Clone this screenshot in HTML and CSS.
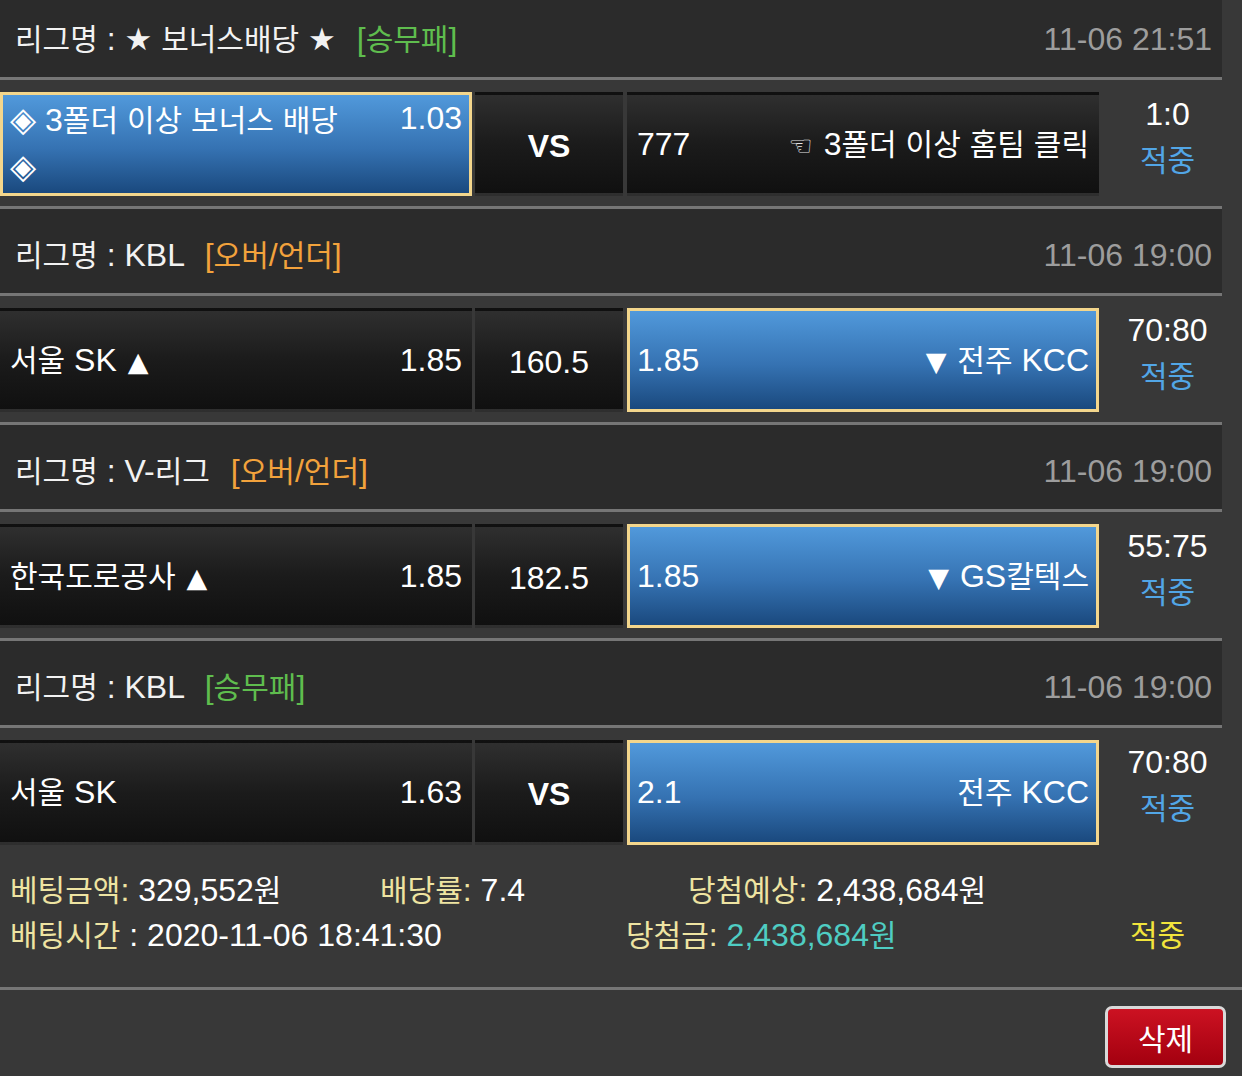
FILE: index.html
```html
<!DOCTYPE html>
<html lang="ko">
<head>
<meta charset="utf-8">
<title>베팅내역</title>
<link rel="stylesheet" href="styles.css">
</head>
<body>
<div class="page">
  <div class="board">
    <section class="group">
      <div class="league">
        <div class="lname"><span class="k">리그명</span> : <span class="star">★</span> <span class="k">보너스배당</span> <span class="star">★</span> <span class="tag green">[<span class="k">승무패</span>]</span></div>
        <div class="ldate">11-06 21:51</div>
      </div>
      <div class="bet">
        <div class="cell side sel">
          <div class="name two"><span class="dia">◈</span> 3<span class="k">폴더</span> <span class="k">이상</span> <span class="k">보너스</span> <span class="k">배당</span><br><span class="dia">◈</span></div>
          <div class="odd top">1.03</div>
        </div>
        <div class="cell mid"><b>VS</b></div>
        <div class="cell side">
          <div class="odd">777</div>
          <div class="name"><span class="hand">☜</span> 3<span class="k">폴더</span> <span class="k">이상</span> <span class="k">홈팀</span> <span class="k">클릭</span></div>
        </div>
        <div class="score"><div class="sline">1:0</div><div class="sline hit"><span class="k">적중</span></div></div>
      </div>
    </section>

    <section class="group">
      <div class="league">
        <div class="lname"><span class="k">리그명</span> : KBL <span class="tag orange">[<span class="k">오버</span>/<span class="k">언더</span>]</span></div>
        <div class="ldate">11-06 19:00</div>
      </div>
      <div class="bet">
        <div class="cell side">
          <div class="name"><span class="k">서울</span> SK <span class="tri">▲</span></div>
          <div class="odd">1.85</div>
        </div>
        <div class="cell mid">160.5</div>
        <div class="cell side sel">
          <div class="odd">1.85</div>
          <div class="name"><span class="tri">▼</span> <span class="k">전주</span> KCC</div>
        </div>
        <div class="score"><div class="sline">70:80</div><div class="sline hit"><span class="k">적중</span></div></div>
      </div>
    </section>

    <section class="group">
      <div class="league">
        <div class="lname"><span class="k">리그명</span> : V-<span class="k">리그</span> <span class="tag orange">[<span class="k">오버</span>/<span class="k">언더</span>]</span></div>
        <div class="ldate">11-06 19:00</div>
      </div>
      <div class="bet">
        <div class="cell side">
          <div class="name"><span class="k">한국도로공사</span> <span class="tri">▲</span></div>
          <div class="odd">1.85</div>
        </div>
        <div class="cell mid">182.5</div>
        <div class="cell side sel">
          <div class="odd">1.85</div>
          <div class="name"><span class="tri">▼</span> GS<span class="k">칼텍스</span></div>
        </div>
        <div class="score"><div class="sline">55:75</div><div class="sline hit"><span class="k">적중</span></div></div>
      </div>
    </section>

    <section class="group">
      <div class="league">
        <div class="lname"><span class="k">리그명</span> : KBL <span class="tag green">[<span class="k">승무패</span>]</span></div>
        <div class="ldate">11-06 19:00</div>
      </div>
      <div class="bet">
        <div class="cell side">
          <div class="name"><span class="k">서울</span> SK</div>
          <div class="odd">1.63</div>
        </div>
        <div class="cell mid"><b>VS</b></div>
        <div class="cell side sel">
          <div class="odd">2.1</div>
          <div class="name"><span class="k">전주</span> KCC</div>
        </div>
        <div class="score"><div class="sline">70:80</div><div class="sline hit"><span class="k">적중</span></div></div>
      </div>
    </section>
  </div>

  <div class="summary">
    <div class="srow">
      <div class="c1"><span class="lab"><span class="k">베팅금액</span>:</span> 329,552<span class="k">원</span></div>
      <div class="c2"><span class="lab"><span class="k">배당률</span>:</span> 7.4</div>
      <div><span class="lab"><span class="k">당첨예상</span>:</span> 2,438,684<span class="k">원</span></div>
    </div>
    <div class="srow">
      <div class="d1"><span class="lab"><span class="k">배팅시간</span></span> : 2020-11-06 18:41:30</div>
      <div class="d2"><span class="lab"><span class="k">당첨금</span>:</span> <span class="win">2,438,684<span class="k">원</span></span></div>
      <div class="result"><span class="k">적중</span></div>
    </div>
  </div>

  <div class="foot">
    <button class="del" type="button">삭제</button>
  </div>
</div>
</body>
</html>
```

FILE: styles.css
```css
html, body {
  margin: 0;
  padding: 0;
}

body {
  background: #383838;
  color: #ffffff;
  font-family: "Liberation Sans", "Noto Sans CJK KR", sans-serif;
  font-size: 32px;
  overflow: hidden;
}

.page {
  width: 1242px;
}

.k {
  font-family: "Noto Sans CJK KR", sans-serif;
  font-size: 30px;
  line-height: 1;
}

.board {
  width: 1222px;
  margin-top: -7px;
}

.league {
  box-sizing: border-box;
  height: 87px;
  background: #2b2b2b;
  border-bottom: 3px solid #767676;
  display: flex;
  align-items: center;
  justify-content: space-between;
  padding: 7px 10px 0 15px;
  line-height: 36px;
  color: #f2f2f2;
}

.star {
  font-family: "DejaVu Sans", sans-serif;
  font-size: 31px;
  line-height: 1;
}

.tag {
  margin-left: 12px;
}

.green {
  color: #5fbd4e;
}

.orange {
  color: #f2a23c;
}

.ldate {
  color: #9d9d9d;
}

.bet {
  display: flex;
  height: 129px;
  box-sizing: border-box;
  padding: 12px 0 10px;
  border-bottom: 3px solid #767676;
}

.group:last-child .bet {
  height: 117px;
  padding-bottom: 0;
  border-bottom: 0;
}

.group:last-child .cell {
  height: 105px;
}

.cell {
  box-sizing: border-box;
  height: 104px;
  border: 3px solid transparent;
  background: linear-gradient(#2f2f2f, #1b1b1b 50%, #101010);
  display: flex;
  align-items: center;
  justify-content: space-between;
  padding: 0 7px;
  line-height: 47px;
  color: #ffffff;
}

.side {
  width: 472px;
}

.mid {
  width: 148px;
  margin: 0 4px 0 3px;
  justify-content: center;
  padding-top: 4px;
}

.mid b {
  font-weight: bold;
}

.sel {
  border-color: #f3d68c;
  background: linear-gradient(#5199db, #3572b2 55%, #1a497e);
}

.odd.top {
  align-self: flex-start;
}

.dia {
  font-family: "DejaVu Sans", sans-serif;
  font-size: 34px;
  line-height: 1;
}

.hand {
  font-family: "DejaVu Sans", sans-serif;
  font-size: 27px;
  line-height: 1;
  color: #e6e6e6;
  margin-right: 2px;
}

.tri {
  font-family: "DejaVu Sans", sans-serif;
  font-size: 27px;
  line-height: 1;
  margin: 0 2px;
}

.score {
  box-sizing: border-box;
  width: 123px;
  height: 104px;
  display: flex;
  flex-direction: column;
  align-items: center;
  justify-content: center;
  padding: 0 0 14px 14px;
}

.sline {
  height: 46px;
  line-height: 46px;
}

.hit {
  color: #52a6e6;
}

.summary {
  box-sizing: border-box;
  height: 145px;
  border-bottom: 3px solid #767676;
  padding: 23px 0 0 10px;
}

.srow {
  display: flex;
  height: 45px;
  line-height: 45px;
}

.c1 {
  width: 370px;
}

.c2 {
  width: 308px;
}

.d1 {
  width: 616px;
}

.d2 {
  width: 504px;
}

.lab {
  color: #eee4a2;
}

.win {
  color: #4fcdc3;
}

.result {
  color: #f2e43c;
}

.foot {
  display: flex;
  justify-content: flex-end;
  padding: 16px 16px 0 0;
}

.del {
  box-sizing: border-box;
  width: 121px;
  height: 62px;
  border: 3px solid #d9d9d9;
  border-radius: 7px;
  background: linear-gradient(#cc1222, #a3000f);
  color: #ffffff;
  font-family: "Noto Sans CJK KR", sans-serif;
  font-size: 30px;
  padding: 0;
}
```
